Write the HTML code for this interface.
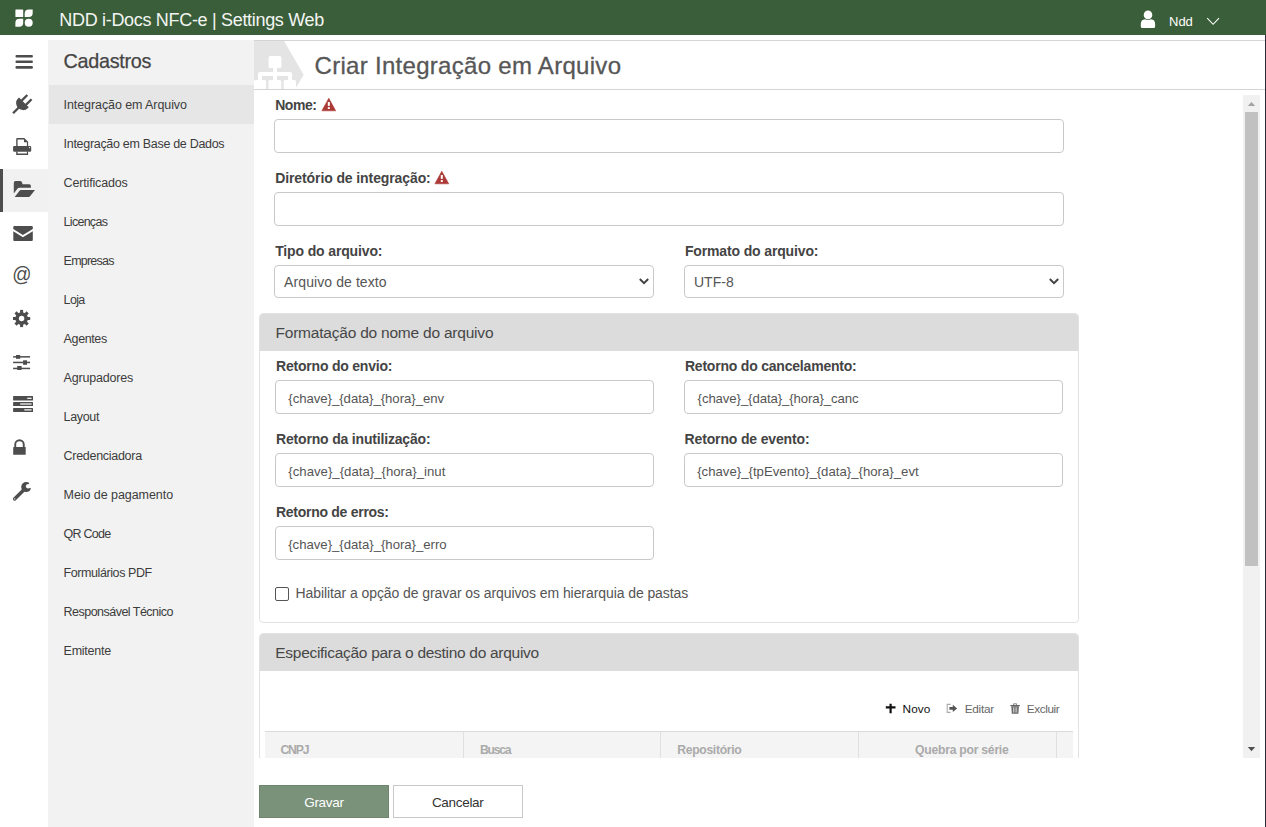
<!DOCTYPE html>
<html><head><meta charset="utf-8"><title>Criar Integração em Arquivo</title>
<style>
*{box-sizing:border-box;margin:0;padding:0}
html,body{width:1266px;height:827px;overflow:hidden;background:#fff;font-family:"Liberation Sans",sans-serif;position:relative}
.t{position:absolute;white-space:nowrap;line-height:1;font-family:"Liberation Sans",sans-serif}
.abs{position:absolute}
#topbar{left:0;top:0;width:1266px;height:35px;background:#3a5e39}
#rail-active{left:0;top:169px;width:48px;height:43px;background:#f1f1f1}
#rail-ind{left:0;top:169px;width:3px;height:43px;background:#4d4d4d}
#sidebar{left:48px;top:40px;width:206px;height:787px;background:#f2f2f2}
#side-active{left:49px;top:85px;width:205px;height:39px;background:#e6e6e6}
#hdr-top{left:254px;top:40px;width:1011px;height:1px;background:#d4d4d4}
#hdr-bot{left:254px;top:89px;width:1011px;height:1px;background:#d4d4d4}
#rightline{left:1265px;top:35px;width:1px;height:792px;background:#2a2a3a}
.inp{position:absolute;border:1px solid #c9c9c9;border-radius:4px;background:#fff}
.panel{position:absolute;border:1px solid #e2e2e2;border-radius:4px;background:#fff;overflow:hidden}
.phead{position:absolute;left:0;top:0;right:0;height:37px;background:#dcdcdc}
#scroll-track{left:1243px;top:95px;width:17px;height:663px;background:#f1f1f1}
#scroll-thumb{left:1245px;top:112px;width:13px;height:454px;background:#c1c1c1}
.btn{position:absolute;top:785px;height:33px}
#gravar{left:259px;width:130px;background:#7a917a;border:1px solid #6f876f}
#cancelar{left:393px;width:130px;background:#fff;border:1px solid #c8c8c8}
#thead{left:265px;top:731px;width:808px;height:27px;background:#f4f4f4;border-top:1px solid #dadada}
.sep{position:absolute;top:732px;width:1px;height:26px;background:#e0e0e0}

</style></head><body>
<div id="topbar" class="abs"></div>
<svg class="abs" style="left:0;top:0" width="48" height="35" viewBox="0 0 48 35">
  <rect x="15.4" y="9.4" width="7.8" height="7.7" rx="0.6" fill="#fff"/>
  <path d="M24.7 17.1 L24.7 13.4 Q24.7 9.4 28.7 9.4 L32.7 9.4 L32.7 13.1 Q32.7 17.1 28.7 17.1 Z" fill="#fff"/>
  <path d="M15.4 26.7 L15.4 22.7 Q15.4 18.7 19.4 18.7 L23.2 18.7 L23.2 22.7 Q23.2 26.7 19.2 26.7 Z" fill="#fff"/>
  <circle cx="28.7" cy="22.7" r="4" fill="#fff"/>
</svg>
<svg class="abs" style="left:1130px;top:0" width="100" height="35" viewBox="1130 0 100 35">
  <circle cx="1148" cy="14.9" r="4.3" fill="#fff"/>
  <path d="M1140.8 26.4 L1140.8 24 Q1140.8 19.5 1145 19.2 Q1148 20.6 1151 19.2 Q1155.1 19.5 1155.1 24 L1155.1 26.4 Q1155.1 27.9 1153.6 27.9 L1142.3 27.9 Q1140.8 27.9 1140.8 26.4 Z" fill="#fff"/>
  <path d="M1207.2 18.2 L1213.1 24.3 L1219 18.2" fill="none" stroke="#fff" stroke-width="1.1"/>
</svg>
<div id="rail-active" class="abs"></div>
<div id="rail-ind" class="abs"></div>
<div id="sidebar" class="abs"></div>
<div id="side-active" class="abs"></div>
<div id="hdr-top" class="abs"></div>
<div id="hdr-bot" class="abs"></div>
<svg class="abs" style="left:254px;top:41px" width="60" height="48" viewBox="254 41 60 48">
  <path d="M254 41 L284 41 L303.7 74.8 L283.3 109 L254 109 Z" fill="#e4e4e4"/>
  <rect x="268.6" y="56" width="12.8" height="12" rx="1.5" fill="#fff"/>
  <rect x="273.1" y="67" width="3.8" height="6" fill="#fff"/>
  <path d="M258 80 L258 74 Q258 72 260 72 L290 72 Q292 72 292 74 L292 80 L288 80 L288 76 L277 76 L277 80 L273 80 L273 76 L262 76 L262 80 Z" fill="#fff"/>
  <rect x="254" y="79.9" width="12.1" height="12" rx="1.5" fill="#fff"/>
  <rect x="268.5" y="79.9" width="12.7" height="12" rx="1.5" fill="#fff"/>
  <rect x="283.7" y="79.9" width="12.3" height="12" rx="1.5" fill="#fff"/>
</svg>
<svg class="abs" style="left:0;top:40px" width="48" height="480" viewBox="0 40 48 480">
  <g fill="#4d4d4d">
    <rect x="15.5" y="55" width="17.4" height="2.5" rx="1"/>
    <rect x="15.5" y="60.4" width="17.4" height="2.5" rx="1"/>
    <rect x="15.5" y="66.1" width="17.4" height="2.6" rx="1"/>
    <!-- plug -->
  </g>
  <g fill="#4d4d4d" transform="translate(23.9 102.3) rotate(45)">
    <path d="M-6.9 0 L6.9 0 L6.9 1.8 A6.9 6.2 0 0 1 -6.9 1.8 Z"/>
    <rect x="-3.9" y="-7.6" width="2.3" height="8"/>
    <rect x="2.1" y="-7.6" width="2.3" height="8"/>
    <rect x="-1.1" y="6" width="2.3" height="9.4"/>
  </g>
  <!-- printer -->
  <g fill="#4d4d4d">
    <path d="M16.2 146 L16.2 139.2 Q16.2 138.1 17.3 138.1 L24.3 138.1 L28.1 141.7 L28.1 146 L26.9 146 L26.9 142.3 L24 142.3 L24 139.6 L17.6 139.6 L17.6 146 Z"/>
    <rect x="13.1" y="145.9" width="18.1" height="5.9" rx="1.2"/>
    <path d="M16.2 151.5 L17.6 151.5 L17.6 153.6 L26.9 153.6 L26.9 151.5 L28.1 151.5 L28.1 154.9 L16.2 154.9 Z"/>
  </g>
  <circle cx="29.6" cy="147.6" r="0.6" fill="#fff"/>
  <!-- folder open -->
  <g fill="#4d4d4d">
    <path d="M13.8 193.6 L13.8 182.8 Q13.8 181.1 15.5 181.1 L20.2 181.1 Q22 181.1 22.5 184.2 L29.2 184.2 Q30.9 184.2 30.9 185.9 L30.9 187.8 L19.6 187.8 Q18 187.8 17 189.2 Z"/>
    <path d="M20.9 190 L35 190 L30 196.3 Q29.5 196.9 28.7 196.9 L14.7 196.9 L19.7 190.6 Q20.2 190 20.9 190 Z"/>
  </g>
  <!-- envelope -->
  <g fill="#4d4d4d">
    <path d="M13.3 227 Q13.3 226 14.3 226 L31.8 226 Q32.8 226 32.8 227 L32.8 228.9 L22.9 235 L13.3 228.9 Z"/>
    <path d="M13.3 231.3 L22.9 237.3 L32.8 231.3 L32.8 240 Q32.8 240.9 31.8 240.9 L14.3 240.9 Q13.3 240.9 13.3 240 Z"/>
  </g>
  <!-- gear -->
  <g fill="#4d4d4d" transform="translate(21.6 318.5)">
    <rect x="-1.5" y="-8.6" width="3" height="17.2"/>
    <rect x="-1.5" y="-8.6" width="3" height="17.2" transform="rotate(45)"/>
    <rect x="-1.5" y="-8.6" width="3" height="17.2" transform="rotate(90)"/>
    <rect x="-1.5" y="-8.6" width="3" height="17.2" transform="rotate(135)"/>
    <circle r="6.3"/>
  </g>
  <circle cx="21.6" cy="318.5" r="2.7" fill="#fff"/>
  <!-- sliders -->
  <g fill="#4d4d4d">
    <rect x="13.1" y="356.1" width="17" height="1.5"/>
    <rect x="13.1" y="361.7" width="17" height="1.5"/>
    <rect x="13.1" y="367.7" width="17" height="1.5"/>
    <rect x="16" y="355" width="4.2" height="3.8"/>
    <rect x="23.1" y="360.3" width="3.9" height="4.5"/>
    <rect x="17.2" y="366" width="4.4" height="4"/>
  </g>
  <!-- server -->
  <g fill="#4d4d4d">
    <rect x="13.1" y="396.1" width="19.9" height="4.3" rx="0.5"/>
    <rect x="13.1" y="402.1" width="19.9" height="3.8" rx="0.5"/>
    <rect x="13.1" y="408" width="19.9" height="3.9" rx="0.5"/>
  </g>
  <g fill="#fff">
    <rect x="27.2" y="397.7" width="4.4" height="1.2"/>
    <rect x="20.2" y="403.4" width="11.4" height="1.2"/>
    <rect x="24.3" y="409.3" width="7.3" height="1.2"/>
  </g>
  <!-- lock -->
  <g fill="#4d4d4d">
    <path d="M14.3 447.2 L14.3 444.5 A5.2 5.2 0 0 1 24.7 444.5 L24.7 447.2 L22.8 447.2 L22.8 444.5 A3.3 3.3 0 0 0 16.2 444.5 L16.2 447.2 Z"/>
    <rect x="13.2" y="447" width="12.5" height="7.8" rx="0.4"/>
  </g>
  <!-- wrench -->
  <circle cx="26.2" cy="487.1" r="5" fill="#4d4d4d"/>
  <circle cx="28.2" cy="486.2" r="2.3" fill="#fff"/>
  <path d="M28.2 486.2 L29.6 482 L33 481.5 L33.5 488.6 L30.8 488.6 Z" fill="#fff"/>
  <g transform="translate(14.3 499.3) rotate(-45)">
    <rect x="-1.2" y="-1.75" width="15" height="3.5" rx="1.6" fill="#4d4d4d"/>
    <circle cx="0.6" cy="0" r="0.7" fill="#fff"/>
  </g>
  <!-- lock shackle fix -->
</svg>
<div class="t" style="left:12.2px;top:265px;font-size:19px;color:#4d4d4d;font-weight:400;transform:scaleY(1.02);transform-origin:50% 52%">@</div>

<!-- form -->
<div class="inp" style="left:274px;top:119px;width:790px;height:34px"></div>
<div class="inp" style="left:274px;top:192px;width:790px;height:34px"></div>
<div class="inp" style="left:274px;top:265px;width:380px;height:33px"></div>
<div class="inp" style="left:684px;top:265px;width:380px;height:33px"></div>
<svg class="abs" style="left:0;top:0" width="1266" height="827" viewBox="0 0 1266 827">
  <path d="M639.8 279 L644 283.2 L648.2 279" fill="none" stroke="#444" stroke-width="2"/>
  <path d="M1049.8 279 L1054 283.2 L1058.2 279" fill="none" stroke="#444" stroke-width="2"/>
  <path d="M328.8 98.2 L335.7 110.8 L321.9 110.8 Z" fill="#ab3a36" stroke="#ab3a36" stroke-width="0.6" stroke-linejoin="round"/>
  <rect x="327.8" y="102" width="2" height="3.9" fill="#fff"/>
  <rect x="327.8" y="107.1" width="2" height="1.9" fill="#fff"/>
  <path d="M441.8 171.2 L448.7 183.8 L434.9 183.8 Z" fill="#ab3a36" stroke="#ab3a36" stroke-width="0.6" stroke-linejoin="round"/>
  <rect x="440.8" y="175" width="2" height="3.9" fill="#fff"/>
  <rect x="440.8" y="180.1" width="2" height="1.9" fill="#fff"/>
</svg>

<div class="panel" style="left:259px;top:313px;width:820px;height:310px"><div class="phead"></div></div>
<div class="inp" style="left:275px;top:380px;width:379px;height:34px"></div>
<div class="inp" style="left:684px;top:380px;width:379px;height:34px"></div>
<div class="inp" style="left:275px;top:453px;width:379px;height:34px"></div>
<div class="inp" style="left:684px;top:453px;width:379px;height:34px"></div>
<div class="inp" style="left:275px;top:526px;width:379px;height:34px"></div>
<div class="abs" style="left:275px;top:587px;width:14px;height:14px;border:1px solid #555;border-radius:2px;background:#fff"></div>

<div class="panel" style="left:259px;top:633px;width:820px;height:200px"><div class="phead"></div></div>
<div id="thead" class="abs"></div>
<div class="sep" style="left:463px"></div>
<div class="sep" style="left:660px"></div>
<div class="sep" style="left:858px"></div>
<div class="sep" style="left:1056px"></div>
<!-- toolbar icons -->
<svg class="abs" style="left:0;top:0" width="1266" height="827" viewBox="0 0 1266 827">
  <path d="M885.8 707.3 L895.5 707.3 M890.6 703.7 L890.6 713.2" stroke="#111" stroke-width="2.2"/>
  <path d="M950.6 704.4 L947.2 704.4 L947.2 712.4 L950.6 712.4" stroke="#aaa" stroke-width="1.1" fill="none"/>
  <path d="M949.4 707 L952.8 707 L952.8 704.7 L957.1 708.4 L952.8 712.1 L952.8 709.8 L949.4 709.8 Z" fill="#555"/>
  <path d="M1010.3 705.6 L1019.9 705.6" stroke="#666" stroke-width="1.2"/>
  <path d="M1013.6 705.2 L1013.6 703.8 L1016.6 703.8 L1016.6 705.2" stroke="#777" stroke-width="0.9" fill="none"/>
  <path d="M1011.3 706.2 L1018.9 706.2 L1018.4 713.8 L1011.8 713.8 Z" fill="#666"/>
  <path d="M1013.5 707.3 L1013.5 712.6 M1015.1 707.3 L1015.1 712.6 M1016.7 707.3 L1016.7 712.6" stroke="#ddd" stroke-width="0.8"/>
</svg>
<!-- clip bottom of scroll area -->
<div class="abs" style="left:254px;top:758px;width:1011px;height:69px;background:#fff"></div>
<div id="gravar" class="btn"></div>
<div id="cancelar" class="btn"></div>
<div id="scroll-track" class="abs"></div>
<div id="scroll-thumb" class="abs"></div>
<svg class="abs" style="left:1240px;top:95px" width="22" height="665" viewBox="1240 95 22 665">
  <path d="M1247.8 106 L1251.5 102 L1255.2 106 Z" fill="#a3a3a3"/>
  <path d="M1247.8 747 L1251.5 751.3 L1255.2 747 Z" fill="#505050"/>
</svg>
<div id="rightline" class="abs"></div>

<div class="t" id="t0" style="top:11.00px;font-size:18px;font-weight:400;color:#f3f5f3;letter-spacing:-0.314px;left:59.30px;">NDD i-Docs NFC-e | Settings Web</div>
<div class="t" id="t1" style="top:15.00px;font-size:13px;font-weight:400;color:#ffffff;letter-spacing:-0.080px;left:1169.10px;">Ndd</div>
<div class="t" id="t2" style="top:52.00px;font-size:19.8px;font-weight:400;color:#454545;letter-spacing:-0.295px;-webkit-text-stroke:0.25px #454545;left:63.60px;">Cadastros</div>
<div class="t" id="t3" style="top:99.00px;font-size:12.5px;font-weight:400;color:#3c3c3c;letter-spacing:-0.084px;left:63.60px;">Integração em Arquivo</div>
<div class="t" id="t4" style="top:138.00px;font-size:12.5px;font-weight:400;color:#3c3c3c;letter-spacing:-0.302px;left:63.60px;">Integração em Base de Dados</div>
<div class="t" id="t5" style="top:177.00px;font-size:12.5px;font-weight:400;color:#3c3c3c;letter-spacing:-0.164px;left:63.60px;">Certificados</div>
<div class="t" id="t6" style="top:216.00px;font-size:12.5px;font-weight:400;color:#3c3c3c;letter-spacing:-0.721px;left:63.60px;">Licenças</div>
<div class="t" id="t7" style="top:255.00px;font-size:12.5px;font-weight:400;color:#3c3c3c;letter-spacing:-0.783px;left:63.60px;">Empresas</div>
<div class="t" id="t8" style="top:294.00px;font-size:12.5px;font-weight:400;color:#3c3c3c;letter-spacing:-0.647px;left:63.60px;">Loja</div>
<div class="t" id="t9" style="top:333.00px;font-size:12.5px;font-weight:400;color:#3c3c3c;letter-spacing:-0.379px;left:63.60px;">Agentes</div>
<div class="t" id="t10" style="top:372.00px;font-size:12.5px;font-weight:400;color:#3c3c3c;letter-spacing:-0.188px;left:63.60px;">Agrupadores</div>
<div class="t" id="t11" style="top:411.00px;font-size:12.5px;font-weight:400;color:#3c3c3c;letter-spacing:-0.346px;left:63.60px;">Layout</div>
<div class="t" id="t12" style="top:450.00px;font-size:12.5px;font-weight:400;color:#3c3c3c;letter-spacing:-0.292px;left:63.60px;">Credenciadora</div>
<div class="t" id="t13" style="top:489.00px;font-size:12.5px;font-weight:400;color:#3c3c3c;letter-spacing:-0.062px;left:63.60px;">Meio de pagamento</div>
<div class="t" id="t14" style="top:528.00px;font-size:12.5px;font-weight:400;color:#3c3c3c;letter-spacing:-0.768px;left:63.60px;">QR Code</div>
<div class="t" id="t15" style="top:567.00px;font-size:12.5px;font-weight:400;color:#3c3c3c;letter-spacing:-0.419px;left:63.60px;">Formulários PDF</div>
<div class="t" id="t16" style="top:606.00px;font-size:12.5px;font-weight:400;color:#3c3c3c;letter-spacing:-0.527px;left:63.60px;">Responsável Técnico</div>
<div class="t" id="t17" style="top:645.00px;font-size:12.5px;font-weight:400;color:#3c3c3c;letter-spacing:-0.263px;left:63.60px;">Emitente</div>
<div class="t" id="t18" style="top:54.00px;font-size:24px;font-weight:400;color:#575757;letter-spacing:0.296px;-webkit-text-stroke:0.3px #575757;left:314.50px;">Criar Integração em Arquivo</div>
<div class="t" id="t19" style="top:98.00px;font-size:14px;font-weight:700;color:#444;letter-spacing:-0.441px;left:275.20px;">Nome:</div>
<div class="t" id="t20" style="top:171.00px;font-size:14px;font-weight:700;color:#444;letter-spacing:-0.101px;left:275.20px;">Diretório de integração:</div>
<div class="t" id="t21" style="top:244.00px;font-size:14px;font-weight:700;color:#444;letter-spacing:-0.140px;left:275.20px;">Tipo do arquivo:</div>
<div class="t" id="t22" style="top:244.00px;font-size:14px;font-weight:700;color:#444;letter-spacing:-0.140px;left:684.90px;">Formato do arquivo:</div>
<div class="t" id="t23" style="top:275.00px;font-size:14px;font-weight:400;color:#555;letter-spacing:0.089px;left:284.10px;">Arquivo de texto</div>
<div class="t" id="t24" style="top:275.00px;font-size:14px;font-weight:400;color:#555;left:694.00px;">UTF-8</div>
<div class="t" id="t25" style="top:325.00px;font-size:15.5px;font-weight:400;color:#474747;letter-spacing:-0.215px;left:275.50px;">Formatação do nome do arquivo</div>
<div class="t" id="t26" style="top:359.00px;font-size:14px;font-weight:700;color:#444;letter-spacing:-0.205px;left:276.00px;">Retorno do envio:</div>
<div class="t" id="t27" style="top:359.00px;font-size:14px;font-weight:700;color:#444;letter-spacing:-0.204px;left:684.90px;">Retorno do cancelamento:</div>
<div class="t" id="t28" style="top:432.00px;font-size:14px;font-weight:700;color:#444;letter-spacing:-0.178px;left:276.00px;">Retorno da inutilização:</div>
<div class="t" id="t29" style="top:432.00px;font-size:14px;font-weight:700;color:#444;letter-spacing:-0.152px;left:684.60px;">Retorno de evento:</div>
<div class="t" id="t30" style="top:505.00px;font-size:14px;font-weight:700;color:#444;letter-spacing:-0.279px;left:276.00px;">Retorno de erros:</div>
<div class="t" id="t31" style="top:392.00px;font-size:13.2px;font-weight:400;color:#555;letter-spacing:-0.048px;left:288.30px;">{chave}_{data}_{hora}_env</div>
<div class="t" id="t32" style="top:392.00px;font-size:13.2px;font-weight:400;color:#555;letter-spacing:-0.102px;left:697.60px;">{chave}_{data}_{hora}_canc</div>
<div class="t" id="t33" style="top:465.00px;font-size:13.2px;font-weight:400;color:#555;letter-spacing:0.002px;left:288.30px;">{chave}_{data}_{hora}_inut</div>
<div class="t" id="t34" style="top:465.00px;font-size:13.2px;font-weight:400;color:#555;letter-spacing:0.000px;left:697.20px;">{chave}_{tpEvento}_{data}_{hora}_evt</div>
<div class="t" id="t35" style="top:538.00px;font-size:13.2px;font-weight:400;color:#555;letter-spacing:-0.026px;left:288.20px;">{chave}_{data}_{hora}_erro</div>
<div class="t" id="t36" style="top:586.00px;font-size:14px;font-weight:400;color:#555;letter-spacing:-0.079px;left:295.50px;">Habilitar a opção de gravar os arquivos em hierarquia de pastas</div>
<div class="t" id="t37" style="top:645.00px;font-size:15.5px;font-weight:400;color:#474747;letter-spacing:-0.291px;left:275.30px;">Especificação para o destino do arquivo</div>
<div class="t" id="t38" style="top:704.00px;font-size:11.8px;font-weight:400;color:#111;letter-spacing:0.051px;left:902.60px;">Novo</div>
<div class="t" id="t39" style="top:704.00px;font-size:11.8px;font-weight:400;color:#666;letter-spacing:-0.246px;left:964.70px;">Editar</div>
<div class="t" id="t40" style="top:704.00px;font-size:11.8px;font-weight:400;color:#666;letter-spacing:-0.384px;left:1026.70px;">Excluir</div>
<div class="t" id="t41" style="top:744.00px;font-size:12.2px;font-weight:700;color:#aaa;letter-spacing:-1.105px;left:280.40px;">CNPJ</div>
<div class="t" id="t42" style="top:744.00px;font-size:12.2px;font-weight:700;color:#aaa;letter-spacing:-1.248px;left:480.00px;">Busca</div>
<div class="t" id="t43" style="top:744.00px;font-size:12.2px;font-weight:700;color:#aaa;letter-spacing:-0.312px;left:677.20px;">Repositório</div>
<div class="t" id="t44" style="top:744.00px;font-size:12.2px;font-weight:700;color:#aaa;letter-spacing:-0.250px;left:915.00px;">Quebra por série</div>
<div class="t" id="t45" style="top:796.00px;font-size:13.5px;font-weight:400;color:#ffffff;letter-spacing:-0.293px;left:304.20px;">Gravar</div>
<div class="t" id="t46" style="top:796.00px;font-size:13.5px;font-weight:400;color:#333;letter-spacing:-0.304px;left:431.90px;">Cancelar</div>
</body></html>
